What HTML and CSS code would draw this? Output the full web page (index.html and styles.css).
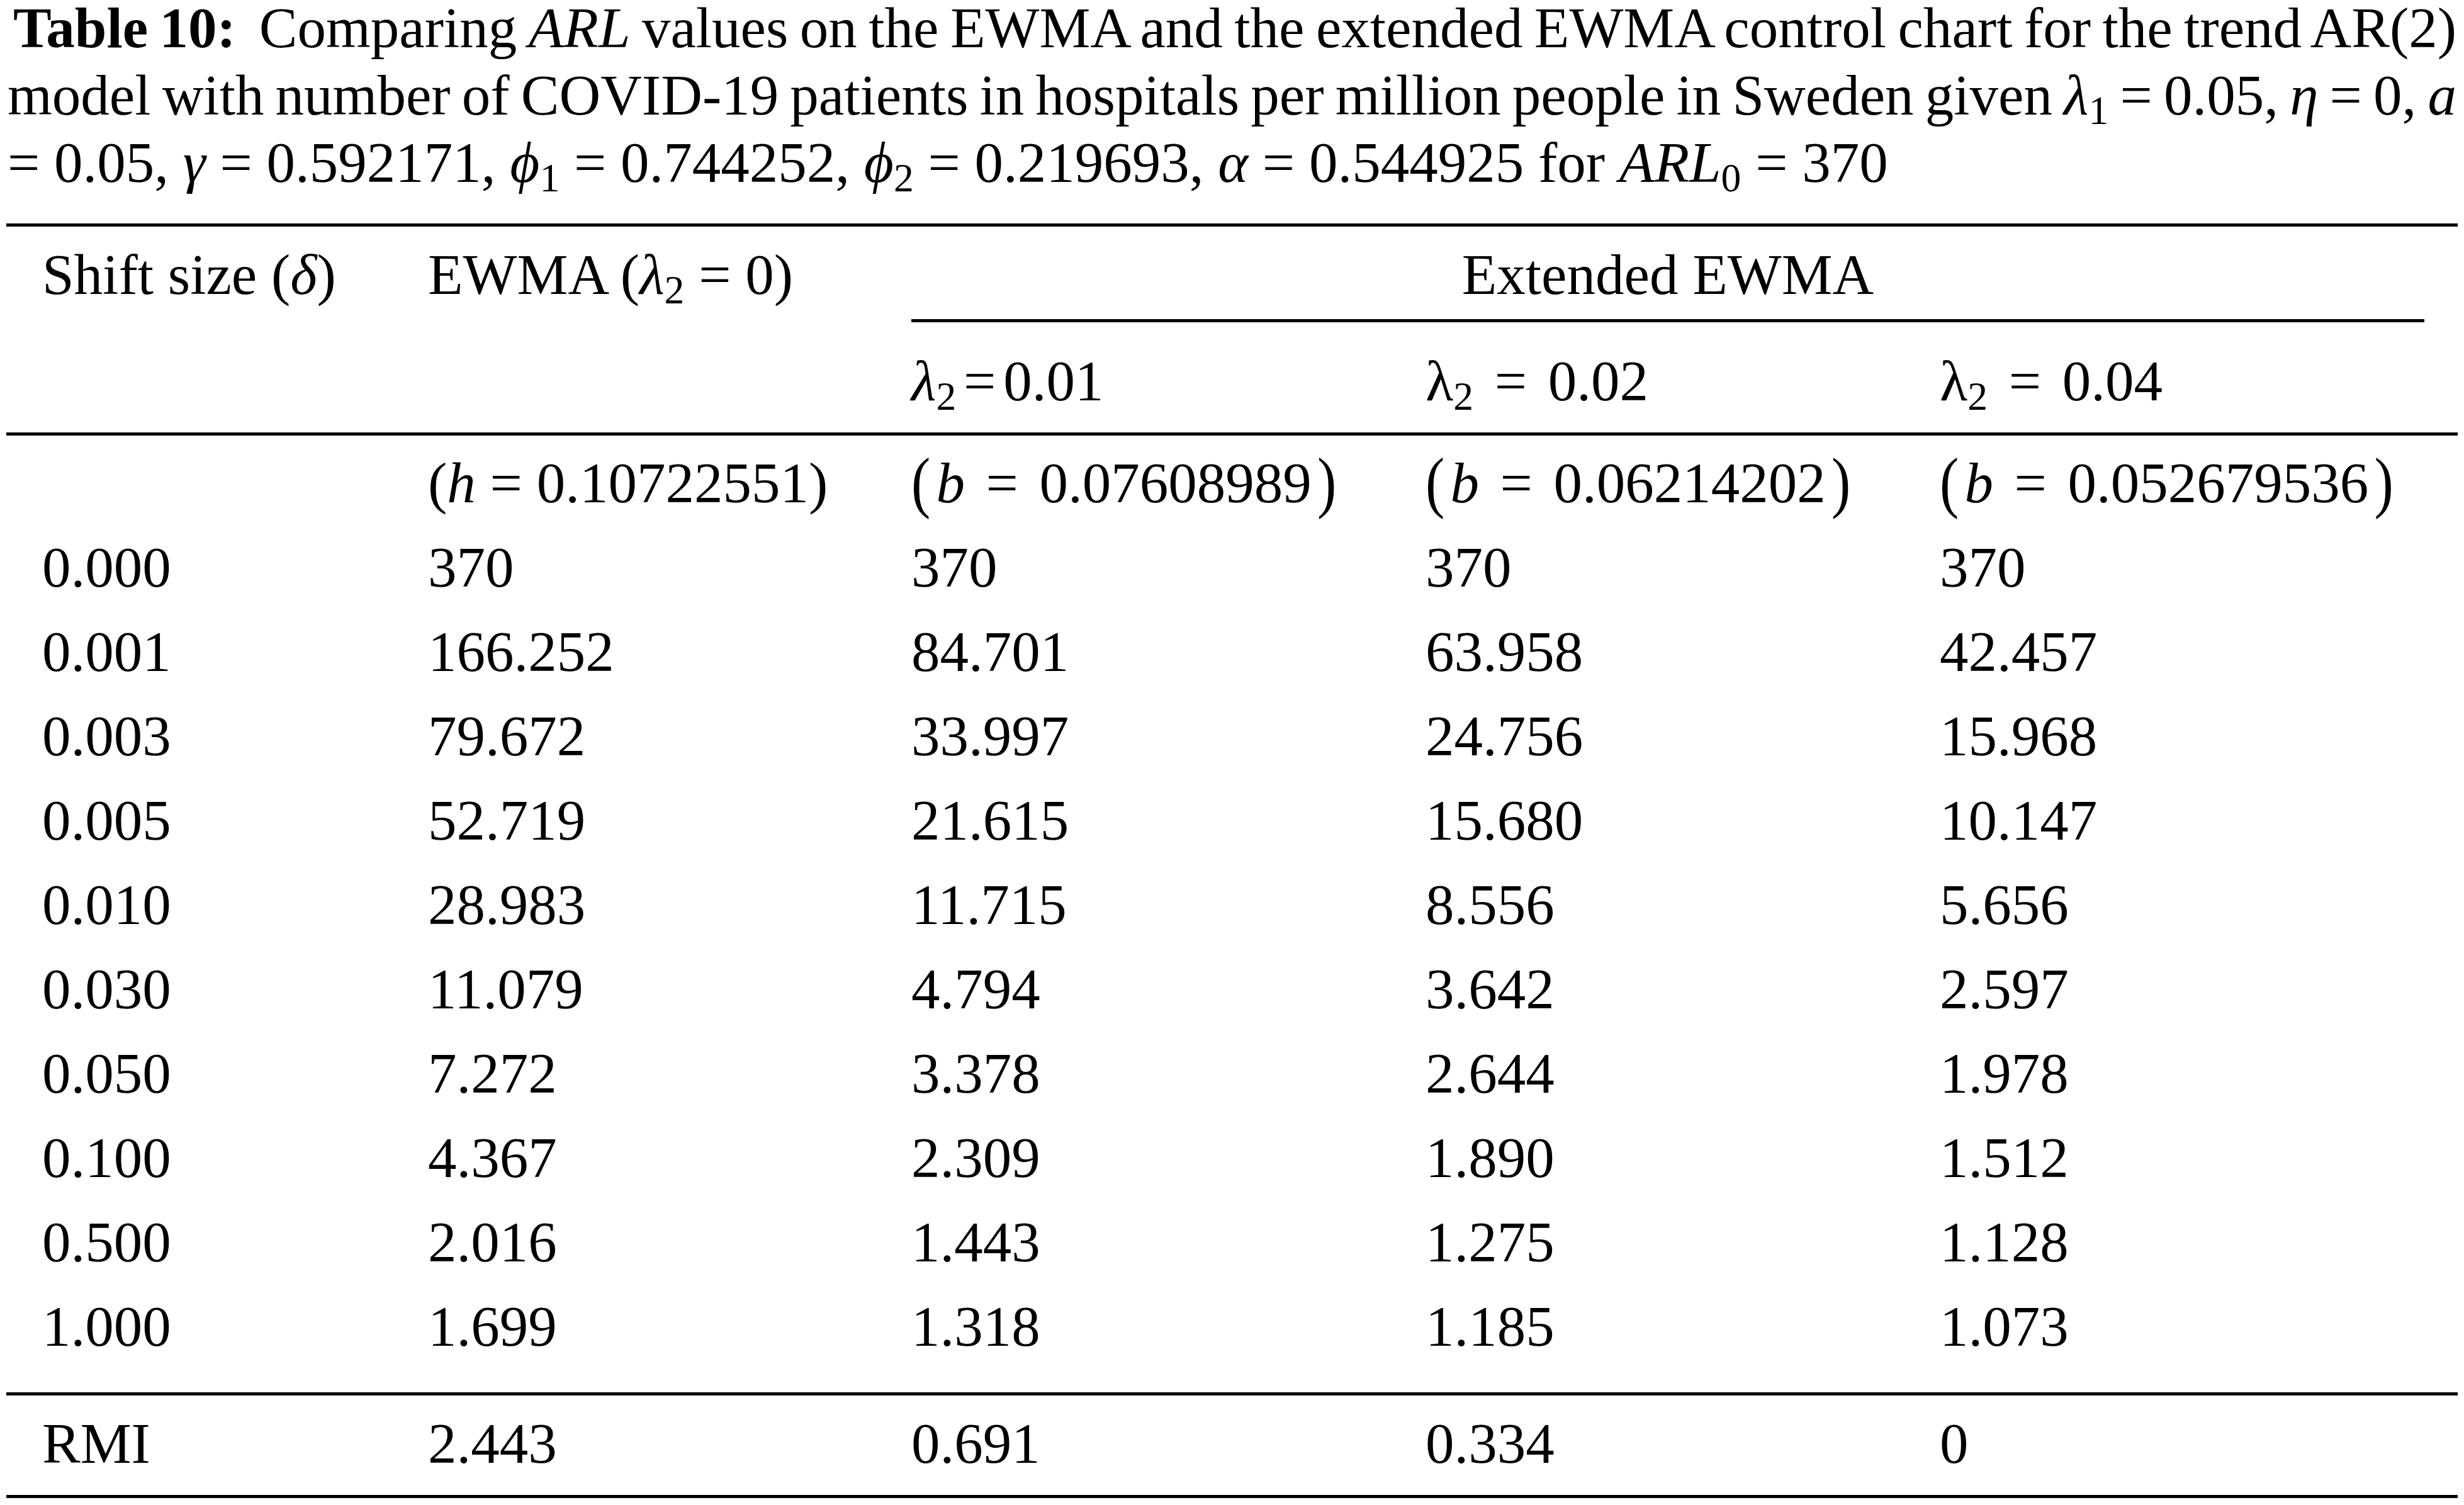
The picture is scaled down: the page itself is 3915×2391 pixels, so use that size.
FILE: index.html
```html
<!DOCTYPE html>
<html lang="en">
<head>
<meta charset="utf-8">
<title>Table 10: ARL comparison</title>
<link rel="stylesheet" href="styles.css">
</head>
<body>
<div class="page">
  <div class="caption">
    <div class="cap-line cap-first"><b class="label">Table 10:</b>&nbsp; Comparing <i>ARL</i> values on the EWMA and the extended EWMA control chart for the trend AR(2)</div>
    <div class="cap-line">model with number of COVID-19 patients in hospitals per million people in Sweden given <i>λ</i><span class="sub">1</span> = 0.05, <i>η</i> = 0, <i>a</i></div>
    <div class="cap-line cap-last">= 0.05, <i>γ</i> = 0.592171, <i class="phi">ϕ</i><span class="sub">1</span> = 0.744252, <i class="phi">ϕ</i><span class="sub">2</span> = 0.219693, <i>α</i> = 0.544925 for <i>ARL</i><span class="sub">0</span> = 370</div>
  </div>

  <table class="arl">
    <colgroup>
      <col class="w1"><col class="w2"><col class="w3"><col class="w4"><col class="w5">
    </colgroup>
    <thead>
      <tr class="h1">
        <th rowspan="2" class="span2">Shift size (<i>δ</i>)</th>
        <th rowspan="2" class="span2">EWMA (<i>λ</i><span class="sub">2</span> = 0)</th>
        <th colspan="3" class="group"><div class="group-label">Extended EWMA</div></th>
      </tr>
      <tr class="h2">
        <th><span class="tight"><i>λ</i><span class="sub">2</span> = 0.01</span></th>
        <th><span class="wide">λ<span class="sub">2</span> = 0.02</span></th>
        <th><span class="wide">λ<span class="sub">2</span> = 0.04</span></th>
      </tr>
    </thead>
    <tbody>
      <tr class="first">
        <td></td>
        <td>(<i>h</i> = 0.10722551)</td>
        <td><span class="bp">(</span><span class="wide"><i>b</i> = 0.07608989</span><span class="bp">)</span></td>
        <td><span class="bp">(</span><span class="wide"><i>b</i> = 0.06214202</span><span class="bp">)</span></td>
        <td><span class="bp">(</span><span class="wide"><i>b</i> = 0.052679536</span><span class="bp">)</span></td>
      </tr>
      <tr><td>0.000</td><td>370</td><td>370</td><td>370</td><td>370</td></tr>
      <tr><td>0.001</td><td>166.252</td><td>84.701</td><td>63.958</td><td>42.457</td></tr>
      <tr><td>0.003</td><td>79.672</td><td>33.997</td><td>24.756</td><td>15.968</td></tr>
      <tr><td>0.005</td><td>52.719</td><td>21.615</td><td>15.680</td><td>10.147</td></tr>
      <tr><td>0.010</td><td>28.983</td><td>11.715</td><td>8.556</td><td>5.656</td></tr>
      <tr><td>0.030</td><td>11.079</td><td>4.794</td><td>3.642</td><td>2.597</td></tr>
      <tr><td>0.050</td><td>7.272</td><td>3.378</td><td>2.644</td><td>1.978</td></tr>
      <tr><td>0.100</td><td>4.367</td><td>2.309</td><td>1.890</td><td>1.512</td></tr>
      <tr><td>0.500</td><td>2.016</td><td>1.443</td><td>1.275</td><td>1.128</td></tr>
      <tr class="last"><td>1.000</td><td>1.699</td><td>1.318</td><td>1.185</td><td>1.073</td></tr>
      <tr class="rmi"><td>RMI</td><td>2.443</td><td>0.691</td><td>0.334</td><td>0</td></tr>
    </tbody>
  </table>
</div>
</body>
</html>
```

FILE: styles.css
```css
html, body {
  margin: 0;
  padding: 0;
  background: #ffffff;
}

body {
  color: #000000;
  font-family: "Liberation Serif", "Times New Roman", "DejaVu Serif", serif;
  font-size: 91px;
}

.page {
  width: 3915px;
  height: 2391px;
  overflow: hidden;
}

/* ---------- caption ---------- */
.caption {
  margin: 0 0 0 12px;
  width: 3891px;
  line-height: 107px;
}

.cap-line {
  text-align: justify;
  text-align-last: justify;
  word-spacing: -10px;
}

.cap-first {
  line-height: 89px;
  padding-bottom: 9px;
  text-indent: 9px;
}

.cap-last {
  text-align: left;
  text-align-last: left;
  word-spacing: 0;
  white-space: nowrap;
}

.label {
  font-weight: 700;
}

.sub {
  font-size: 0.7em;
  font-style: normal;
  vertical-align: -0.24em;
  line-height: 0;
}

.phi {
  font-style: italic;
}

/* ---------- table ---------- */
.arl {
  margin: 43px 0 0 10px;
  width: 3895px;
  table-layout: fixed;
  border-collapse: separate;
  border-spacing: 0;
  border-top: 5px solid #000000;
}

.w1 { width: 613px; }
.w2 { width: 768px; }
.w3 { width: 817px; }
.w4 { width: 817px; }
.w5 { width: 880px; }

.arl th,
.arl td {
  padding: 0 0 0 57px;
  line-height: 134px;
  font-weight: 400;
  text-align: left;
  vertical-align: top;
  white-space: nowrap;
}

.arl .h1 th {
  padding-top: 10px;
}

.arl th.span2 {
  border-bottom: 5px solid #000000;
}

.arl th.group {
  padding: 10px 53px 0 57px;
}

.group-label {
  text-align: center;
  padding-bottom: 3px;
  border-bottom: 5px solid #000000;
}

.arl .h2 th {
  padding-top: 27px;
  padding-bottom: 14px;
  border-bottom: 5px solid #000000;
}

.arl .first td {
  padding-top: 9px;
}

.arl .last td {
  padding-bottom: 37px;
}

.arl .rmi td {
  padding-top: 10px;
  padding-bottom: 14px;
  border-top: 5px solid #000000;
  border-bottom: 5px solid #000000;
}

.tight {
  word-spacing: -0.12em;
}

.wide {
  word-spacing: 0.12em;
}

.bp {
  display: inline-block;
  line-height: 91px;
  padding: 0 0.1em;
  transform: scaleY(1.18);
  transform-origin: 50% 53px;
}

.bp:first-child {
  padding-left: 0;
}
```
